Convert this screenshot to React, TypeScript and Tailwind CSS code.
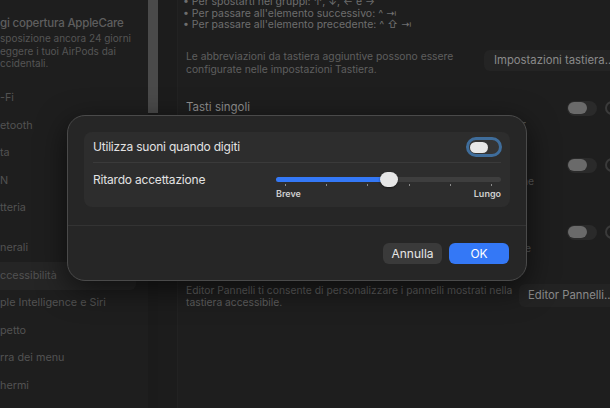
import React from "react";

function BgToggle() {
  return (
    <div className="flex items-center shrink-0">
      <div className="w-[30px] h-[15px] rounded-full bg-[#2a2a2a] flex items-center px-[1px]">
        <div className="w-[19px] h-[12px] rounded-full bg-[#6a6a6a]" />
      </div>
      <div className="ml-[8px] w-[14px] h-[14px] rounded-full border-[2px] border-[#3a3a3a]" />
    </div>
  );
}

export default function App() {
  const sideItems1 = ["-Fi", "etooth", "ta", "N", "tteria"];
  const sideItems2 = ["nerali", "ccessibilità", "ple Intelligence e Siri", "petto", "rra dei menu", "hermi"];
  const ticks = [0, 1, 2, 3, 4, 5];
  return (
    <div className="w-[610px] h-[408px] relative overflow-hidden bg-[#1b1b1b] flex font-['Inter','Noto_Sans',sans-serif]">
      {/* Sidebar */}
      <div className="w-[148px] shrink-0 h-full bg-[#1e1e1e] flex flex-col text-[#525252] overflow-hidden">
        <div className="pt-[15px] text-[11.5px] tracking-[-0.2px] leading-[16px] font-medium text-[#5e5e5e] whitespace-nowrap">gi copertura AppleCare</div>
        <div className="text-[10px] leading-[12.5px] text-[#555555] whitespace-nowrap mt-[1px]">
          <div>sposizione ancora 24 giorni</div>
          <div>eggere i tuoi AirPods dai</div>
          <div>ccidentali.</div>
        </div>
        <div className="mt-[15px] flex flex-col">
          {sideItems1.map((t) => (
            <div key={t} className="h-[27.5px] flex items-center text-[10.8px] whitespace-nowrap">{t}</div>
          ))}
        </div>
        <div className="mt-[12.5px] flex flex-col">
          {sideItems2.map((t, i) => (
            <div
              key={t}
              className={
                "h-[27.5px] flex items-center text-[10.8px] whitespace-nowrap " +
                (i === 1 ? "bg-[#252525] w-[136px] rounded-r-[6px]" : "")
              }
            >
              {t}
            </div>
          ))}
        </div>
      </div>
      {/* Scroll strip */}
      <div className="w-[10px] shrink-0 h-full flex flex-col bg-[#1b1b1b]">
        <div className="h-[113px] bg-[#4a4a4a]" />
      </div>
      {/* Content */}
      <div className="flex-1 min-w-0 h-full flex overflow-hidden">
        <div className="w-[20px] shrink-0 h-full bg-[#1c1c1c] border-r border-[#222]" />
        <div className="flex-1 min-w-0 h-full bg-[#1e1e1e] flex flex-col text-[#7a7a7a]">
          <div className="mt-[-4px] pl-[5px] text-[10.5px] leading-[11.5px] text-[#6e6e6e] whitespace-nowrap">
            <div>• Per spostarti nei gruppi: ↑, ↓, ← e →</div>
            <div>• Per passare all'elemento successivo: ^ ⇥</div>
            <div>• Per passare all'elemento precedente: ^ ⇧ ⇥</div>
          </div>
          <div className="mt-[19px] flex items-start">
            <div className="pl-[8px] w-[305px] shrink-0 text-[10.3px] leading-[13px] text-[#5f5f5f]">
              Le abbreviazioni da tastiera aggiuntive possono essere configurate nelle impostazioni Tastiera.
            </div>
            <div className="ml-[1px] mt-[0.5px] h-[21px] pl-[10px] pr-[4px] rounded-[6px] bg-[#242424] text-[11.3px] text-[#8a8a8a] flex items-center whitespace-nowrap">
              Impostazioni tastiera...
            </div>
          </div>
          <div className="mt-[22.5px] h-[20px] flex items-center">
            <div className="pl-[8px] w-[389px] shrink-0 text-[11.5px] text-[#8e8e8e]">Tasti singoli</div>
            <BgToggle />
          </div>
          <div className="w-[348px] text-right text-[10.3px] leading-[13px] text-[#5a5a5a] whitespace-nowrap overflow-hidden">
            Ignora la pressione ripetuta involontaria per
          </div>
          <div className="mt-[24px] h-[20px] flex items-center">
            <div className="pl-[8px] w-[389px] shrink-0 text-[11.5px] text-[#8e8e8e]">Tasti lenti</div>
            <BgToggle />
          </div>
          <div className="w-[356px] text-right text-[10.3px] leading-[13px] text-[#5a5a5a] whitespace-nowrap overflow-hidden">
            Regola il ritardo prima che venga accettata la pressione
          </div>
          <div className="mt-[34px] h-[20px] flex items-center">
            <div className="pl-[8px] w-[389px] shrink-0 text-[11.5px] text-[#8e8e8e]">Tasti del mouse</div>
            <BgToggle />
          </div>
          <div className="w-[353px] text-right text-[10.3px] leading-[13px] text-[#5a5a5a] whitespace-nowrap overflow-hidden">
            Controlla il puntatore con la tastiera numerica e
          </div>
          <div className="mt-[29px] flex items-start">
            <div className="pl-[8px] w-[339px] shrink-0 text-[10.3px] leading-[12px] text-[#5f5f5f]">
              Editor Pannelli ti consente di personalizzare i pannelli mostrati nella tastiera accessibile.
            </div>
            <div className="ml-[2px] h-[23px] pl-[9px] pr-[4px] rounded-[6px] bg-[#232323] text-[11.3px] text-[#8a8a8a] flex items-center whitespace-nowrap">
              Editor Pannelli...
            </div>
          </div>
        </div>
      </div>

      {/* Dialog */}
      <div className="absolute left-[67px] top-[115px] w-[460px] h-[166px] rounded-[18px] bg-[#262626] border border-[#4a4a4a] shadow-[0_8px_30px_rgba(0,0,0,0.6)] flex flex-col">
        <div className="mx-[16px] mt-[16px] h-[75px] rounded-[8px] bg-[#2d2d2d] px-[9px] flex flex-col">
          <div className="h-[31px] flex items-center justify-between border-b border-[#3a3a3a]">
            <div className="text-[12px] tracking-[-0.2px] text-[#e2e2e2]">Utilizza suoni quando digiti</div>
            <div className="w-[36px] h-[20px] rounded-full border-[3px] border-[#3f6d9b] bg-[#353535] flex items-center px-[1px] mr-[-1px]">
              <div className="w-[18px] h-[11px] rounded-full bg-[#e8e8e8]" />
            </div>
          </div>
          <div className="flex-1 flex items-start pt-[9px]">
            <div className="w-[183px] text-[12px] tracking-[-0.2px] leading-[16px] text-[#e2e2e2]">Ritardo accettazione</div>
            <div className="w-[225px] flex flex-col pt-[5px]">
              <div className="relative h-[5px] rounded-full bg-[#3e3e3e]">
                <div className="h-[5px] w-[113px] rounded-full bg-[#3478f6]" />
                <div className="absolute left-[104px] top-[-5px] w-[18px] h-[15px] rounded-full bg-[#e6e6e6] shadow-[0_1px_2px_rgba(0,0,0,0.5)]" />
              </div>
              <div className="h-[4px] mt-[2px] flex justify-between px-[9px]">
                {ticks.map((t) => (
                  <div key={t} className="w-[1px] h-[1.5px] bg-[#8a8a8a]" />
                ))}
              </div>
              <div className="flex justify-between text-[9px] font-semibold leading-[11px] text-[#cfcfcf]">
                <span>Breve</span>
                <span>Lungo</span>
              </div>
            </div>
          </div>
        </div>
        <div className="mt-[18px] border-t border-[#333333]" />
        <div className="flex-1 flex justify-end items-start pt-[17px] pr-[17px] gap-[7px]">
          <div className="w-[59px] h-[21px] rounded-[6px] bg-[#3a3a3a] text-[12px] text-[#e6e6e6] flex items-center justify-center">Annulla</div>
          <div className="w-[60px] h-[21px] rounded-[6px] bg-[#3478f6] text-[12px] text-white flex items-center justify-center">OK</div>
        </div>
      </div>
    </div>
  );
}
